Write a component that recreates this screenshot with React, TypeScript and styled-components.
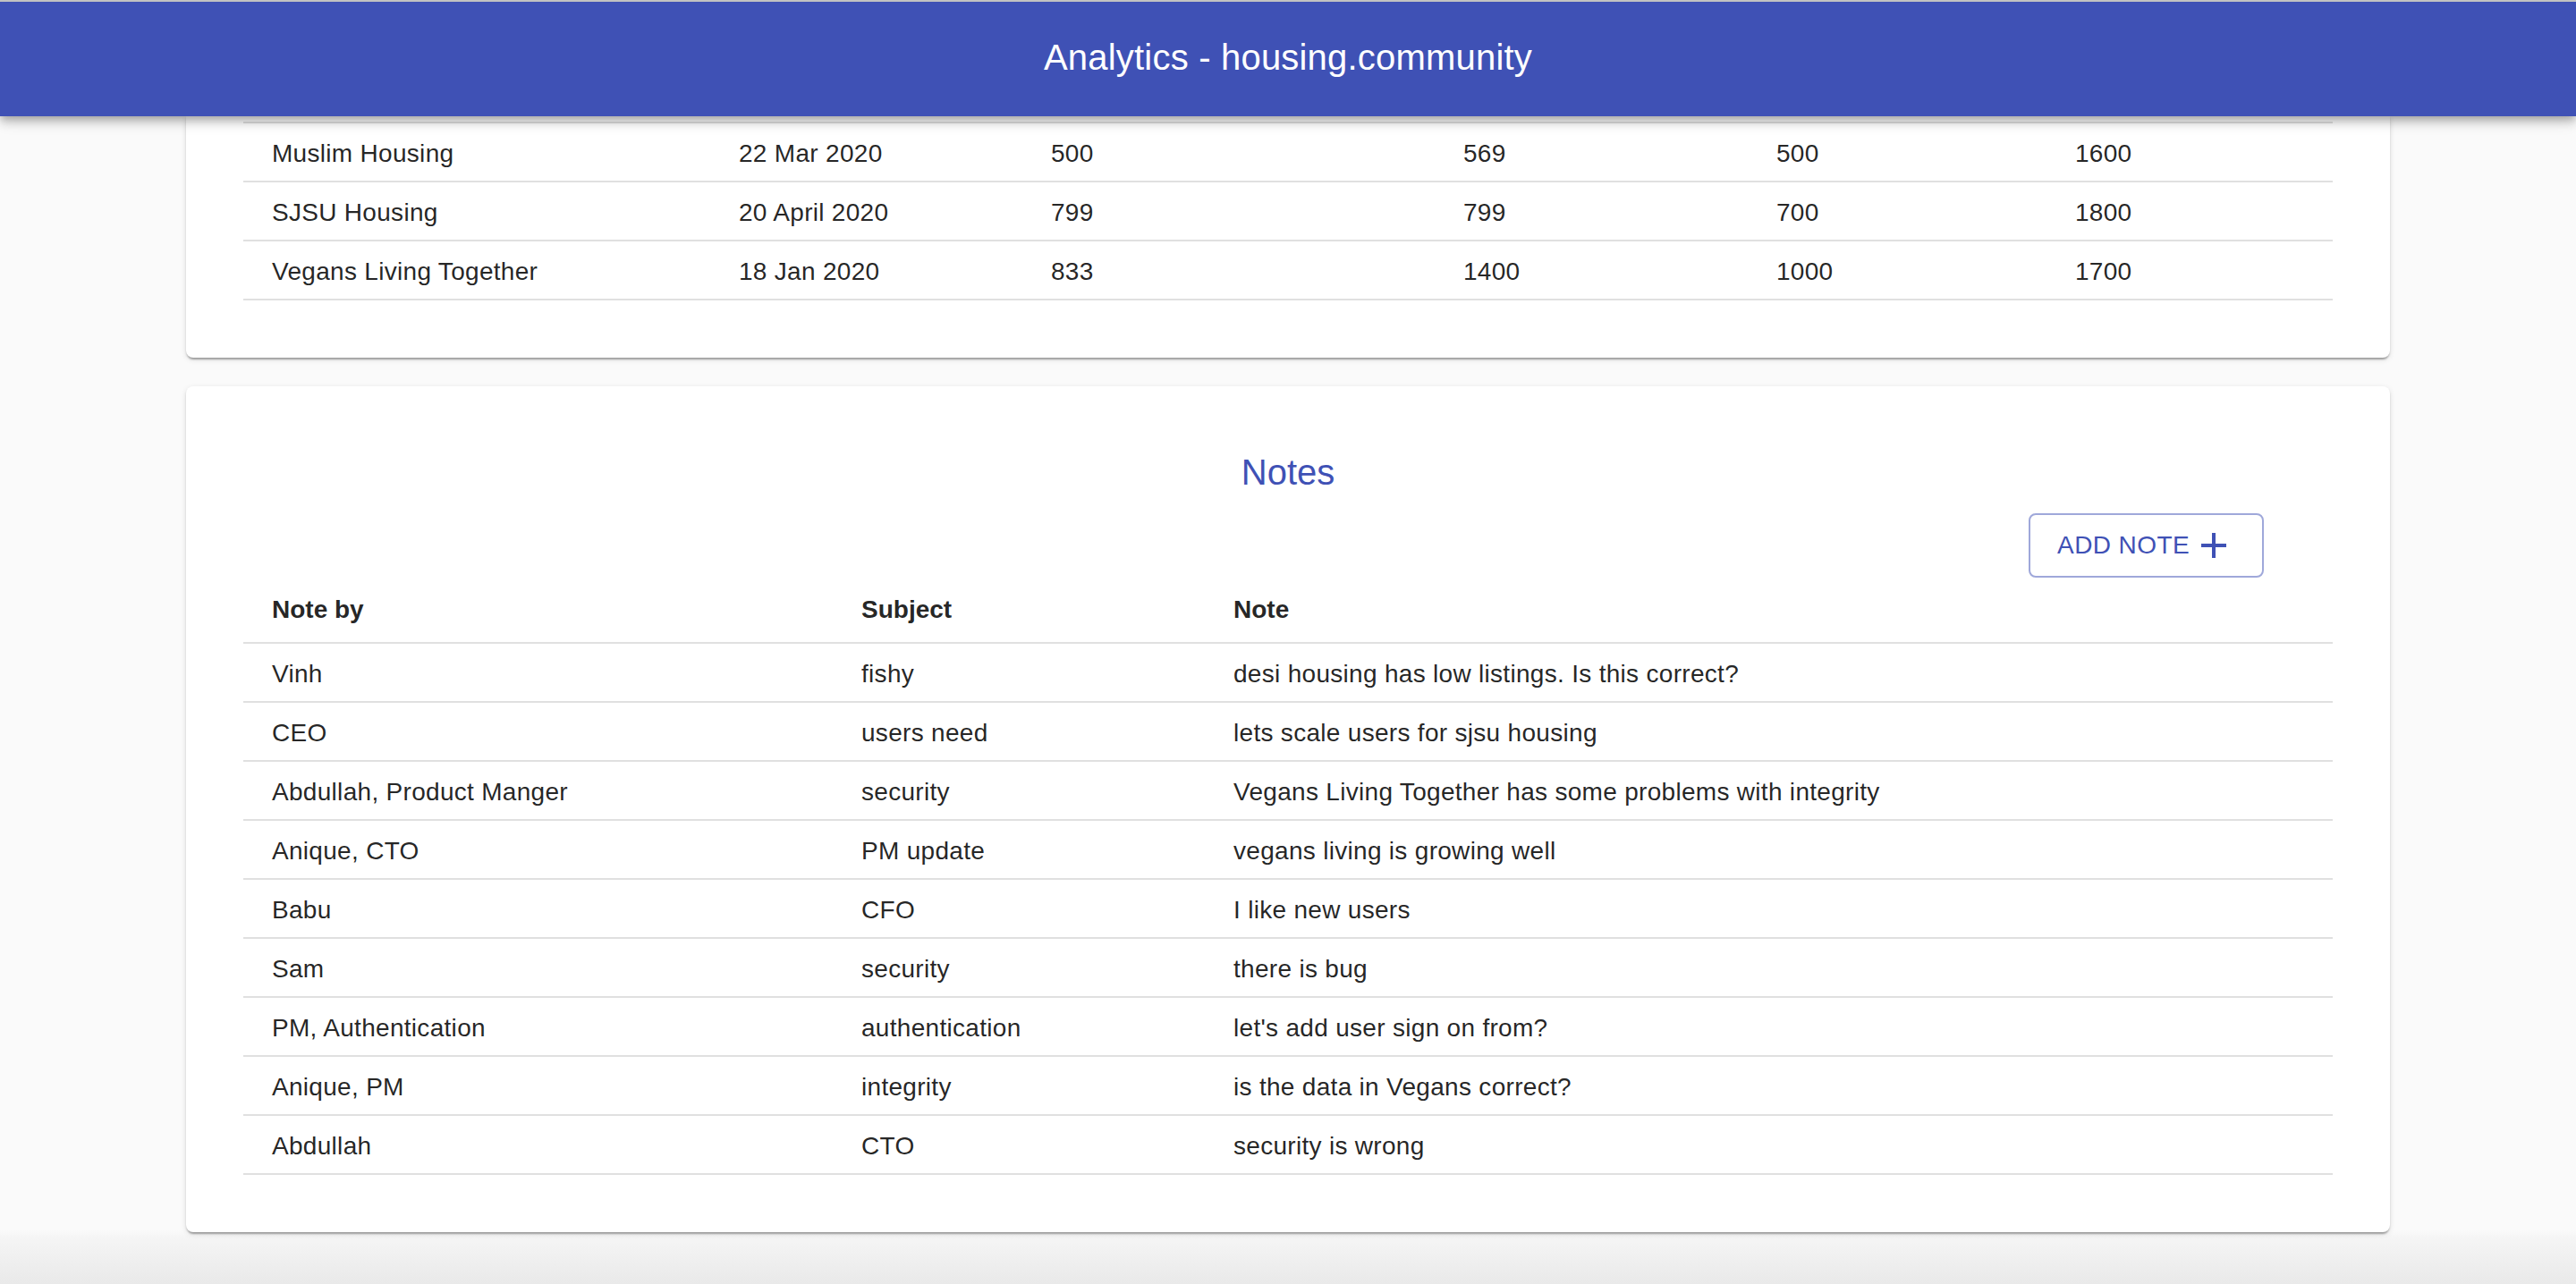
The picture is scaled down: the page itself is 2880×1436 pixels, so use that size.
import React from "react";
import styled, { createGlobalStyle } from "styled-components";

const GlobalStyle = createGlobalStyle`
  html, body {
    margin: 0;
    padding: 0;
  }
  body {
    font-family: "Liberation Sans", Helvetica, Arial, sans-serif;
    color: rgba(0, 0, 0, 0.87);
    background: #fafafa;
  }
`;

const Page = styled.div`
  min-height: 100vh;
  display: flex;
  flex-direction: column;
  background: linear-gradient(
    to bottom,
    #fafafa calc(100% - 60px),
    #f5f5f5 calc(100% - 52px),
    #e9e9e9 100%
  );
`;

const AppBar = styled.header`
  position: sticky;
  top: 0;
  z-index: 2;
  height: 128px;
  border-top: 2px solid #c2c2c2;
  background: #3f51b5;
  color: #fff;
  display: flex;
  align-items: center;
  justify-content: center;
  box-shadow: 0 4px 8px -2px rgba(0, 0, 0, 0.2), 0 8px 10px 0 rgba(0, 0, 0, 0.14),
    0 2px 20px 0 rgba(0, 0, 0, 0.12);
`;

const AppTitle = styled.h1`
  margin: 0 0 4px;
  font-size: 40px;
  font-weight: 400;
  line-height: 64px;
  letter-spacing: 0.2px;
`;

const Main = styled.main`
  width: 100%;
  max-width: 2560px;
  margin: 0 auto;
  padding: 0 48px;
  box-sizing: border-box;
  display: flex;
  flex-direction: column;
  gap: 32px;
`;

const Card = styled.section<{ $continued?: boolean }>`
  background: #fff;
  border-radius: ${({ $continued }) => ($continued ? "0 0 8px 8px" : "8px")};
  padding: ${({ $continued }) => ($continued ? "6px 64px 64px" : "64px")};
  box-shadow: 0 4px 2px -2px rgba(0, 0, 0, 0.2), 0 2px 2px 0 rgba(0, 0, 0, 0.14),
    0 2px 6px 0 rgba(0, 0, 0, 0.12);
`;

const SectionTitle = styled.h2`
  margin: 0 0 14px;
  text-align: center;
  color: #3f51b5;
  font-size: 40px;
  font-weight: 400;
  line-height: 64px;
`;

const Toolbar = styled.div`
  display: flex;
  justify-content: flex-end;
  height: 72px;
  padding-right: 77px;
`;

const OutlinedButton = styled.button`
  display: inline-flex;
  align-items: center;
  gap: 3px;
  height: 72px;
  padding: 0 30px;
  box-sizing: border-box;
  border: 2px solid rgba(63, 81, 181, 0.5);
  border-radius: 8px;
  background: transparent;
  color: #3f51b5;
  font-family: inherit;
  font-size: 28px;
  font-weight: 500;
  letter-spacing: 0.4px;
  text-transform: uppercase;
  cursor: pointer;

  svg {
    width: 48px;
    height: 48px;
    fill: currentColor;
  }
`;

const Table = styled.table<{ $continued?: boolean }>`
  width: 100%;
  border-collapse: collapse;
  table-layout: fixed;
  border-top: ${({ $continued }) => ($continued ? "2px solid #e0e0e0" : "none")};
`;

const HeadCell = styled.th`
  padding: 12px 48px 12px 32px;
  font-size: 28px;
  line-height: 48px;
  font-weight: 700;
  text-align: left;
  border-bottom: 2px solid #e0e0e0;
  white-space: nowrap;
`;

const Cell = styled.td`
  padding: 14px 48px 10px 32px;
  font-size: 28px;
  line-height: 40px;
  letter-spacing: 0.3px;
  text-align: left;
  border-bottom: 2px solid #e0e0e0;
  white-space: nowrap;
`;

const communities = [
  ["Muslim Housing", "22 Mar 2020", "500", "569", "500", "1600"],
  ["SJSU Housing", "20 April 2020", "799", "799", "700", "1800"],
  ["Vegans Living Together", "18 Jan 2020", "833", "1400", "1000", "1700"],
];
const communityCols = [522, 349, 461, 350, 334, 320];

const notes = [
  ["Vinh", "fishy", "desi housing has low listings. Is this correct?"],
  ["CEO", "users need", "lets scale users for sjsu housing"],
  ["Abdullah, Product Manger", "security", "Vegans Living Together has some problems with integrity"],
  ["Anique, CTO", "PM update", "vegans living is growing well"],
  ["Babu", "CFO", "I like new users"],
  ["Sam", "security", "there is bug"],
  ["PM, Authentication", "authentication", "let's add user sign on from?"],
  ["Anique, PM", "integrity", "is the data in Vegans correct?"],
  ["Abdullah", "CTO", "security is wrong"],
];
const noteCols = [659, 416, 1261];

function AddIcon() {
  return (
    <svg viewBox="0 0 24 24" aria-hidden>
      <path d="M19 13h-6v6h-2v-6H5v-2h6V5h2v6h6v2z" />
    </svg>
  );
}

export default function App() {
  return (
    <Page>
      <GlobalStyle />
      <AppBar>
        <AppTitle>Analytics - housing.community</AppTitle>
      </AppBar>
      <Main>
        <Card $continued>
          <Table $continued>
            <colgroup>
              {communityCols.map((w, i) => (
                <col key={i} style={{ width: w }} />
              ))}
            </colgroup>
            <tbody>
              {communities.map((row) => (
                <tr key={row[0]}>
                  {row.map((value, i) => (
                    <Cell key={i}>{value}</Cell>
                  ))}
                </tr>
              ))}
            </tbody>
          </Table>
        </Card>

        <Card>
          <SectionTitle>Notes</SectionTitle>
          <Toolbar>
            <OutlinedButton type="button">
              Add note
              <AddIcon />
            </OutlinedButton>
          </Toolbar>
          <Table>
            <colgroup>
              {noteCols.map((w, i) => (
                <col key={i} style={{ width: w }} />
              ))}
            </colgroup>
            <thead>
              <tr>
                <HeadCell>Note by</HeadCell>
                <HeadCell>Subject</HeadCell>
                <HeadCell>Note</HeadCell>
              </tr>
            </thead>
            <tbody>
              {notes.map((row, r) => (
                <tr key={r}>
                  {row.map((value, i) => (
                    <Cell key={i}>{value}</Cell>
                  ))}
                </tr>
              ))}
            </tbody>
          </Table>
        </Card>
      </Main>
    </Page>
  );
}
